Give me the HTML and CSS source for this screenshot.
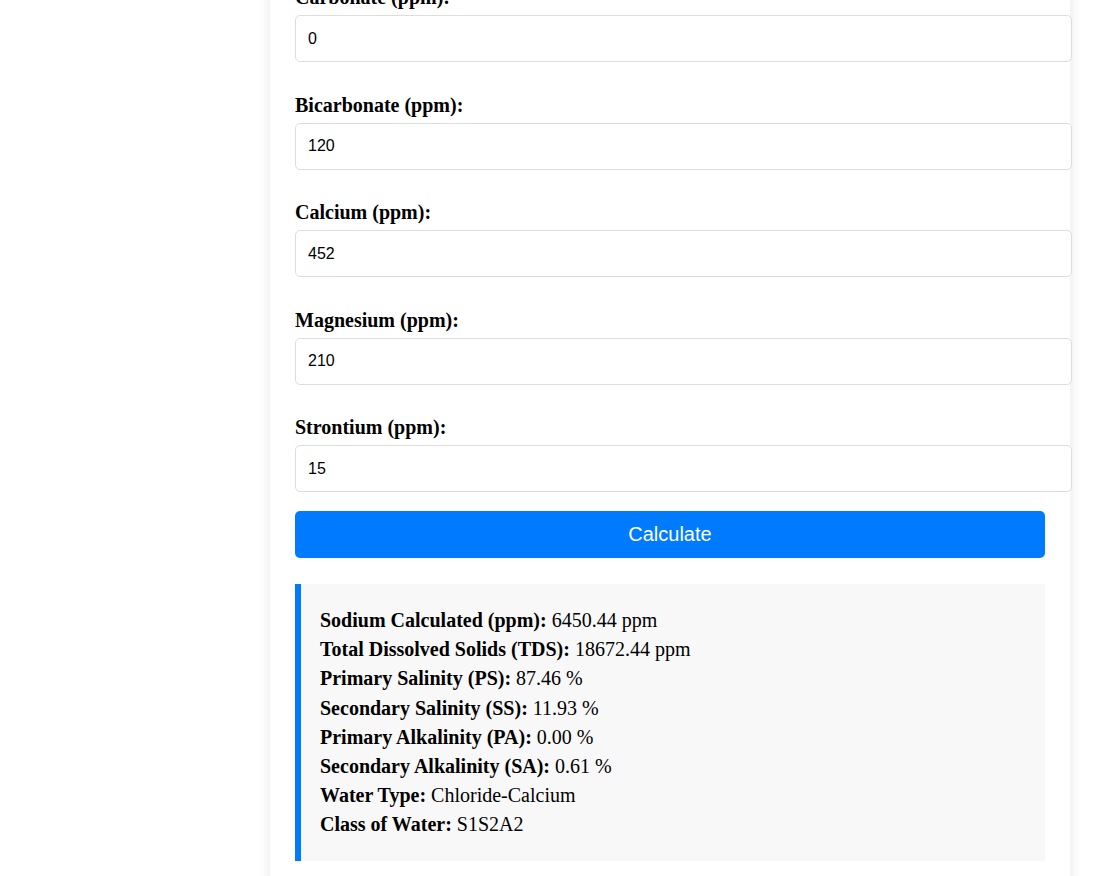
FILE: index.html
```html
<!DOCTYPE html>
<html lang="en">
<head>
<meta charset="utf-8">
<title>Water Classification Calculator</title>
<link rel="stylesheet" href="styles.css">
</head>
<body>
<div class="page">
  <div class="card">
    <form class="form">
      <div class="field">
        <label class="label" for="carbonate">Carbonate (ppm):</label>
        <input class="input" id="carbonate" type="text" value="0">
      </div>
      <div class="field">
        <label class="label" for="bicarbonate">Bicarbonate (ppm):</label>
        <input class="input" id="bicarbonate" type="text" value="120">
      </div>
      <div class="field">
        <label class="label" for="calcium">Calcium (ppm):</label>
        <input class="input" id="calcium" type="text" value="452">
      </div>
      <div class="field">
        <label class="label" for="magnesium">Magnesium (ppm):</label>
        <input class="input" id="magnesium" type="text" value="210">
      </div>
      <div class="field field-last">
        <label class="label" for="strontium">Strontium (ppm):</label>
        <input class="input" id="strontium" type="text" value="15">
      </div>
      <button class="button" type="button">Calculate</button>
    </form>
    <div class="results">
      <p class="line"><strong>Sodium Calculated (ppm):</strong> 6450.44 ppm</p>
      <p class="line"><strong>Total Dissolved Solids (TDS):</strong> 18672.44 ppm</p>
      <p class="line"><strong>Primary Salinity (PS):</strong> 87.46 %</p>
      <p class="line"><strong>Secondary Salinity (SS):</strong> 11.93 %</p>
      <p class="line"><strong>Primary Alkalinity (PA):</strong> 0.00 %</p>
      <p class="line"><strong>Secondary Alkalinity (SA):</strong> 0.61 %</p>
      <p class="line"><strong>Water Type:</strong> Chloride-Calcium</p>
      <p class="line"><strong>Class of Water:</strong> S1S2A2</p>
    </div>
  </div>
</div>
</body>
</html>
```

FILE: styles.css
```css
html, body {
  margin: 0;
  padding: 0;
  background: #ffffff;
  overflow: hidden;
}

body {
  font-family: "Liberation Serif", "Times New Roman", serif;
  color: #000;
}

.page {
  padding-left: 270px;
}

.card {
  width: 750px;
  margin-top: -39px;
  padding: 25px 25px 40px;
  background: #fff;
  box-shadow: 0 0 12px rgba(0, 0, 0, 0.1);
}

.form {
  display: flex;
  flex-direction: column;
}

.field {
  display: flex;
  flex-direction: column;
  margin-bottom: 31.5px;
}

.field-last {
  margin-bottom: 19px;
}

.label {
  display: block;
  font-weight: bold;
  font-size: 20px;
  line-height: 22px;
  margin-bottom: 7px;
}

.input {
  width: 751px;
  height: 21px;
  padding: 12px;
  margin: 0;
  border: 1px solid #dddddd;
  border-radius: 5px;
  font-family: "Liberation Sans", Arial, sans-serif;
  font-size: 16px;
  color: #000;
  background: #fff;
}

.button {
  width: 750px;
  height: 47px;
  border: none;
  border-radius: 5px;
  background: #007bff;
  color: #fff;
  font-family: "Liberation Sans", Arial, sans-serif;
  font-size: 20px;
  cursor: pointer;
}

.results {
  margin-top: 26px;
  padding: 22px 20px 21px 19px;
  background: #f8f8f8;
  border-left: 6px solid #007bff;
}

.line {
  margin: 0;
  font-size: 20px;
  line-height: 29.2px;
}
```
